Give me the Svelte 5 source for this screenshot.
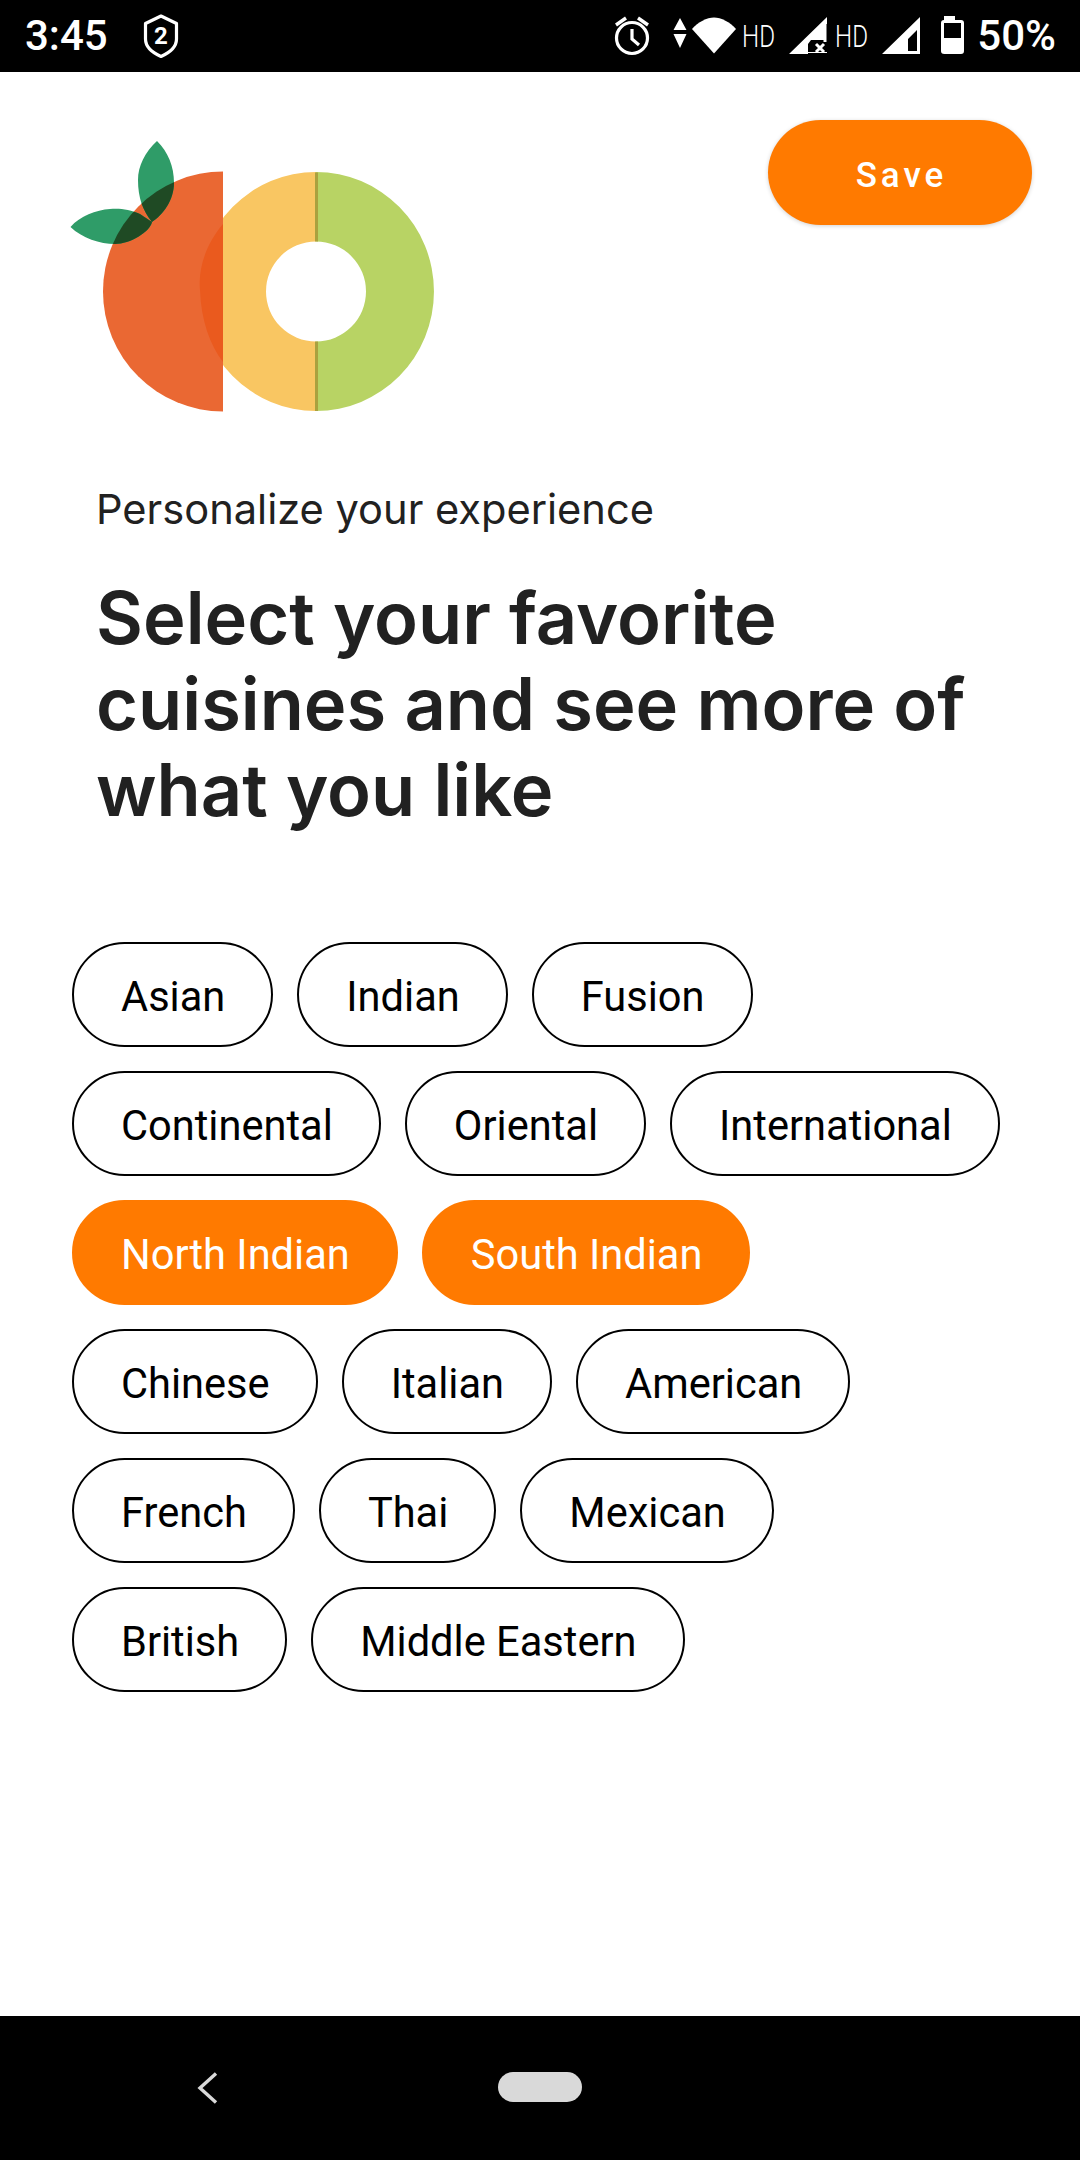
<script>
	const cuisines = [
		{ name: 'Asian' },
		{ name: 'Indian' },
		{ name: 'Fusion' },
		{ name: 'Continental' },
		{ name: 'Oriental' },
		{ name: 'International' },
		{ name: 'North Indian', selected: true },
		{ name: 'South Indian', selected: true },
		{ name: 'Chinese' },
		{ name: 'Italian' },
		{ name: 'American' },
		{ name: 'French' },
		{ name: 'Thai' },
		{ name: 'Mexican' },
		{ name: 'British' },
		{ name: 'Middle Eastern' }
	];

	const leaves =
		'M157 141C145 152 138 166 138 180C138 198 143 211 152 222C152 222 146 218 140 214C130 209 118 208 110 209C96 210 80 216 70.500 227C82 238 100 244 115 244C130 244 150 232 152 222C163 215 174 200 174 183C174 166 168 152 157 141Z';
</script>

<div class="screen">
	<header class="status-bar">
		<div class="status-left">
			<span class="time">3:45</span>
			<svg class="shield" width="36" height="44" viewBox="0 0 36 44" fill="none">
				<path d="M18 2L33.500 9.500V25C33.500 33 27 38.500 18 42.500C9 38.500 2.500 33 2.500 25V9.500Z" stroke="#fff" stroke-width="3.200" stroke-linejoin="round" />
				<text x="18" y="29.500" text-anchor="middle" class="shield-num">2</text>
			</svg>
		</div>
		<div class="status-right">
			<svg width="366" height="72" viewBox="612 0 366 72">
				<g fill="none" stroke="#fff" stroke-width="3.200">
					<circle cx="633" cy="38" r="15.500" />
					<path d="M633 29V39L640 45" />
					<path d="M617 25L627 18M649 25L639 18" stroke-width="3.400" />
				</g>
				<path d="M681 18L687.500 30H674.500ZM681 48L674.500 34H687.500Z" fill="#fff" />
				<path d="M693 29C699 22 708 17.500 715 17.500C722 17.500 731 22 737 29L715 53.500Z" fill="#fff" />
				<text x="743" y="47" class="hd" textLength="33" lengthAdjust="spacingAndGlyphs">HD</text>
				<path d="M790 54L828 17V42H815V54Z" fill="#fff" />
				<path d="M825 24V40H812L809 44V54H828V24Z" fill="#000" />
				<path d="M826 22V42" stroke="#fff" stroke-width="3" />
				<path d="M808 52.500H828" stroke="#fff" stroke-width="1" />
				<path d="M817 44L825 52M825 44L817 52" stroke="#fff" stroke-width="3" />
				<text x="836" y="47" class="hd" textLength="33" lengthAdjust="spacingAndGlyphs">HD</text>
				<path d="M883 54L921 17V54ZM909 51H918V30L909 39Z" fill="#fff" fill-rule="evenodd" />
				<path d="M945 16H956V20H962C964 20 965 21 965 23V51C965 53 964 54 962 54H945.500C943 54 942 53 942 51V23C942 21 943 20 945 20Z" fill="#fff" />
				<rect x="945" y="23" width="17" height="15" fill="#000" />
			</svg>
			<span class="battery">50%</span>
		</div>
	</header>

	<main class="content">
		<div class="top">
			<svg class="logo" width="370" height="280" viewBox="70 136 370 280">
				<defs>
					<clipPath id="orange-clip">
						<path d="M223 171.500A120 120 0 0 0 223 411.500Z" />
					</clipPath>
				</defs>
				<path d="M316 172A118 119.500 0 0 0 316 411V341.500A50 50 0 0 1 316 241.500Z" fill="#f9c662" />
				<path d="M316 172A118 119.500 0 0 1 316 411V341.500A50 50 0 0 0 316 241.500Z" fill="#b8d364" />
				<path d="M315 172.500H318V241.500H315ZM315 341.500H318V411H315Z" fill="#aaa13f" />
				<path d="M223 171.500A120 120 0 0 0 223 411.500Z" fill="#ea6833" />
				<path d="M223 224C205 245 198 270 200 290C201 320 210 345 223 362Z" fill="#ea5a1e" />
				<path d={leaves} fill="#2f9c68" />
				<path d={leaves} fill="#1f4a24" clip-path="url(#orange-clip)" />
			</svg>
			<button class="save">Save</button>
		</div>

		<section class="intro">
			<p class="eyebrow">Personalize your experience</p>
			<h1>Select your favorite cuisines and see more of what you like</h1>
		</section>

		<div class="chips">
			{#each cuisines as cuisine}
				<span class="chip" class:selected={cuisine.selected}>{cuisine.name}</span>
			{/each}
		</div>
	</main>

	<footer class="nav-bar">
		<svg class="back" width="24" height="36" viewBox="0 0 24 36" fill="none">
			<path d="M20 3.500L4 18L20 32.500" stroke="#d9d9d9" stroke-width="3.400" />
		</svg>
		<span class="home"></span>
	</footer>
</div>

<style>
	:global(body) {
		margin: 0;
		background: #fff;
	}

	.screen {
		display: flex;
		flex-direction: column;
		height: 2160px;
		width: 1080px;
		overflow: hidden;
		font-family: Roboto, sans-serif;
	}

	.status-bar {
		display: flex;
		justify-content: space-between;
		align-items: center;
		height: 72px;
		background: #000;
		color: #fff;
		flex-shrink: 0;
	}

	.status-left {
		display: flex;
		align-items: center;
		gap: 35px;
		padding-left: 25px;
	}

	.time,
	.battery {
		font-size: 42px;
		font-weight: 500;
		line-height: 72px;
	}

	.shield {
		margin-top: -1px;
	}

	.shield-num {
		font-size: 24px;
		font-weight: 700;
		fill: #fff;
	}

	.status-right {
		display: flex;
		align-items: center;
		padding-right: 24px;
	}

	.hd {
		font-size: 32px;
		font-weight: 300;
		fill: #fff;
	}

	.content {
		flex: 1;
	}

	.top {
		display: flex;
		justify-content: space-between;
		align-items: flex-start;
		padding: 48px 48px 0 70px;
	}

	.logo {
		display: block;
		margin-top: 16px;
	}

	.save {
		width: 264px;
		height: 105px;
		padding: 6px 0 0 3px;
		border: none;
		border-radius: 53px;
		background: #ff7a00;
		color: #fff;
		font-family: Roboto, sans-serif;
		font-size: 35px;
		font-weight: 500;
		letter-spacing: 4px;
		box-shadow: 0 1px 4px rgba(0, 0, 0, 0.18);
	}

	.intro {
		padding: 68px 72px 0 96px;
		font-family: Inter, sans-serif;
		color: #212121;
	}

	.eyebrow {
		margin: 0;
		font-size: 41.600px;
		line-height: 50px;
	}

	h1 {
		margin: 41px 0 0;
		font-size: 72.200px;
		font-weight: 600;
		line-height: 86px;
	}

	.chips {
		display: flex;
		flex-wrap: wrap;
		gap: 24px;
		padding: 109px 72px 0;
	}

	.chip {
		box-sizing: border-box;
		height: 105px;
		padding: 3px 46px 0 47px;
		display: flex;
		align-items: center;
		border: 2px solid #000;
		border-radius: 53px;
		font-size: 41.600px;
		color: #000;
	}

	.chip.selected {
		background: #ff7a00;
		border-color: #ff7a00;
		color: #fff;
	}

	.nav-bar {
		position: relative;
		display: flex;
		justify-content: center;
		align-items: center;
		height: 144px;
		background: #000;
		flex-shrink: 0;
	}

	.back {
		position: absolute;
		left: 196px;
		top: 54px;
	}

	.home {
		width: 84px;
		height: 30px;
		margin-top: -2px;
		border-radius: 15px;
		background: #d9d9d9;
	}
</style>
